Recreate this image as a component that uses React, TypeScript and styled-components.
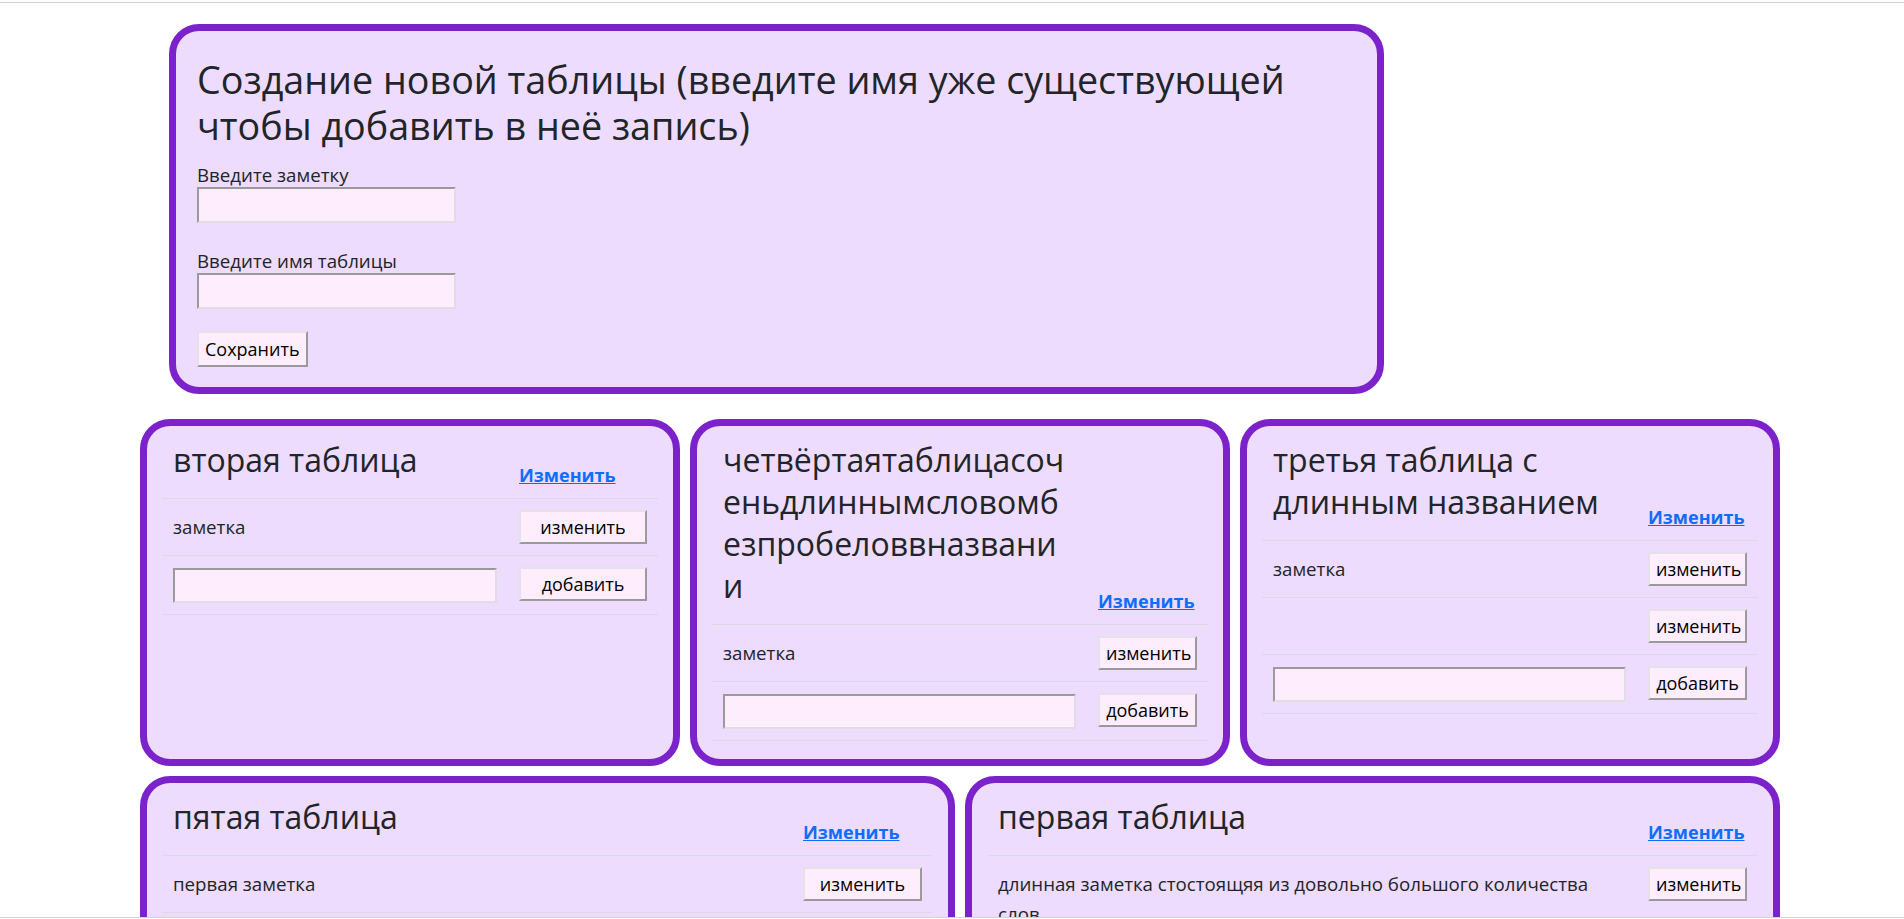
import React from 'react';
import styled, { createGlobalStyle } from 'styled-components';

const GlobalStyle = createGlobalStyle`
  html, body { margin: 0; padding: 0; background: #ffffff; }
  body {
    font-family: "Open Sans", "Noto Sans", sans-serif;
    color: #212529;
  }
  *, *::before, *::after { box-sizing: border-box; }
`;

const Page = styled.div`
  margin-top: 2px;
  border-top: 1px solid #d4d4d4;
  padding: 21px 0 40px 140px;
`;

const Container = styled.div`
  width: 1640px;
  display: flex;
  flex-direction: column;
  gap: 25px;
`;

const CreateCard = styled.section`
  margin-left: 29px;
  width: 1215px;
  background: #eddcfd;
  border: 7px solid #7b22cb;
  border-radius: 30px;
  padding: 26px 21px 20px;
  display: flex;
  flex-direction: column;
  align-items: flex-start;
`;

const MainTitle = styled.h1`
  margin: 0 0 17px;
  font-size: 37.7px;
  line-height: 46px;
  font-weight: 400;
`;

const Label = styled.label`
  display: block;
  margin-bottom: 4px;
  font-size: 18.7px;
  line-height: 17px;
`;

const TextInput = styled.input<{ $width?: string; $gap?: number; $height?: number }>`
  display: block;
  width: ${(p) => p.$width ?? '259px'};
  height: ${(p) => p.$height ?? 36}px;
  margin: 0 0 ${(p) => p.$gap ?? 0}px;
  background: #fdedfd;
  border-width: 2px;
  border-style: solid;
  border-color: #9a9a9a #e2dde4 #e2dde4 #9a9a9a;
  font-family: inherit;
  font-size: 16px;
  padding: 1px 4px;
  outline: none;
`;

const Button = styled.button<{ $tall?: boolean; $full?: boolean }>`
  display: inline-block;
  width: ${(p) => (p.$full ? '100%' : 'auto')};
  margin-top: ${(p) => (p.$tall ? '22px' : '0')};
  padding: ${(p) => (p.$tall ? '4px 6px' : '3px 6px')};
  font-family: inherit;
  font-size: 18px;
  line-height: 24px;
  color: #000;
  background: #fdedfd;
  border-width: 2px;
  border-style: solid;
  border-color: #e6e1e8 #9a9a9a #9a9a9a #e6e1e8;
  cursor: pointer;
`;

const CardGrid = styled.div`
  display: flex;
  flex-wrap: wrap;
  gap: 10px;
`;

const TableCard = styled.section`
  flex: 1 1 500px;
  background: #eddcfd;
  border: 7px solid #7b22cb;
  border-radius: 30px;
  padding: 2px 15px 18px;
`;

const Row = styled.div<{ $action: number; $head?: boolean }>`
  display: grid;
  grid-template-columns: minmax(0, 1fr) ${(p) => p.$action}px;
  align-items: ${(p) => (p.$head ? 'end' : 'baseline')};
  border-bottom: 1px solid #dfd9e6;
`;

const Cell = styled.div`
  padding: 11px;
  min-width: 0;
`;

const TableTitle = styled.h2`
  margin: 0 0 6px;
  font-size: 32px;
  line-height: 42px;
  font-weight: 400;
  overflow-wrap: anywhere;
`;

const EditLink = styled.a`
  font-size: 18px;
  line-height: 24px;
  font-weight: 700;
  color: #0d6efd;
  text-decoration: underline;
`;

const Note = styled.span`
  display: block;
  font-size: 18.7px;
  line-height: 30px;
`;

type TableData = { title: string; notes: string[]; action: number };

const tables: TableData[] = [
  { title: 'вторая таблица', notes: ['заметка'], action: 150 },
  {
    title: 'четвёртаятаблицасоченьдлиннымсловомбезпробеловвназвании',
    notes: ['заметка'],
    action: 121,
  },
  { title: 'третья таблица с длинным названием', notes: ['заметка', ''], action: 121 },
  { title: 'пятая таблица', notes: ['первая заметка'], action: 141 },
  {
    title: 'первая таблица',
    notes: ['длинная заметка стостоящяя из довольно большого количества слов'],
    action: 121,
  },
];

function NoteTable({ data }: { data: TableData }) {
  return (
    <TableCard>
      <Row $action={data.action} $head>
        <Cell>
          <TableTitle>{data.title}</TableTitle>
        </Cell>
        <Cell>
          <EditLink href="#">Изменить</EditLink>
        </Cell>
      </Row>
      {data.notes.map((n, i) => (
        <Row key={i} $action={data.action}>
          <Cell>
            <Note>{n || '\u00a0'}</Note>
          </Cell>
          <Cell>
            <Button $full>изменить</Button>
          </Cell>
        </Row>
      ))}
      <Row $action={data.action}>
        <Cell>
          <TextInput $width="100%" $height={35} />
        </Cell>
        <Cell>
          <Button $full>добавить</Button>
        </Cell>
      </Row>
    </TableCard>
  );
}

const BottomEdge = styled.div`
  position: fixed;
  left: 0;
  right: 0;
  bottom: 0;
  height: 2px;
  background: #ffffff;
  border-top: 1px solid #d4d4d4;
`;

export default function App() {
  return (
    <>
      <GlobalStyle />
      <Page>
        <Container>
          <CreateCard>
            <MainTitle>
              Создание новой таблицы (введите имя уже существующей чтобы добавить в неё запись)
            </MainTitle>
            <Label>Введите заметку</Label>
            <TextInput $gap={29} />
            <Label>Введите имя таблицы</Label>
            <TextInput />
            <Button $tall>Сохранить</Button>
          </CreateCard>
          <CardGrid>
            {tables.map((t) => (
              <NoteTable key={t.title} data={t} />
            ))}
          </CardGrid>
        </Container>
      </Page>
      <BottomEdge />
    </>
  );
}
